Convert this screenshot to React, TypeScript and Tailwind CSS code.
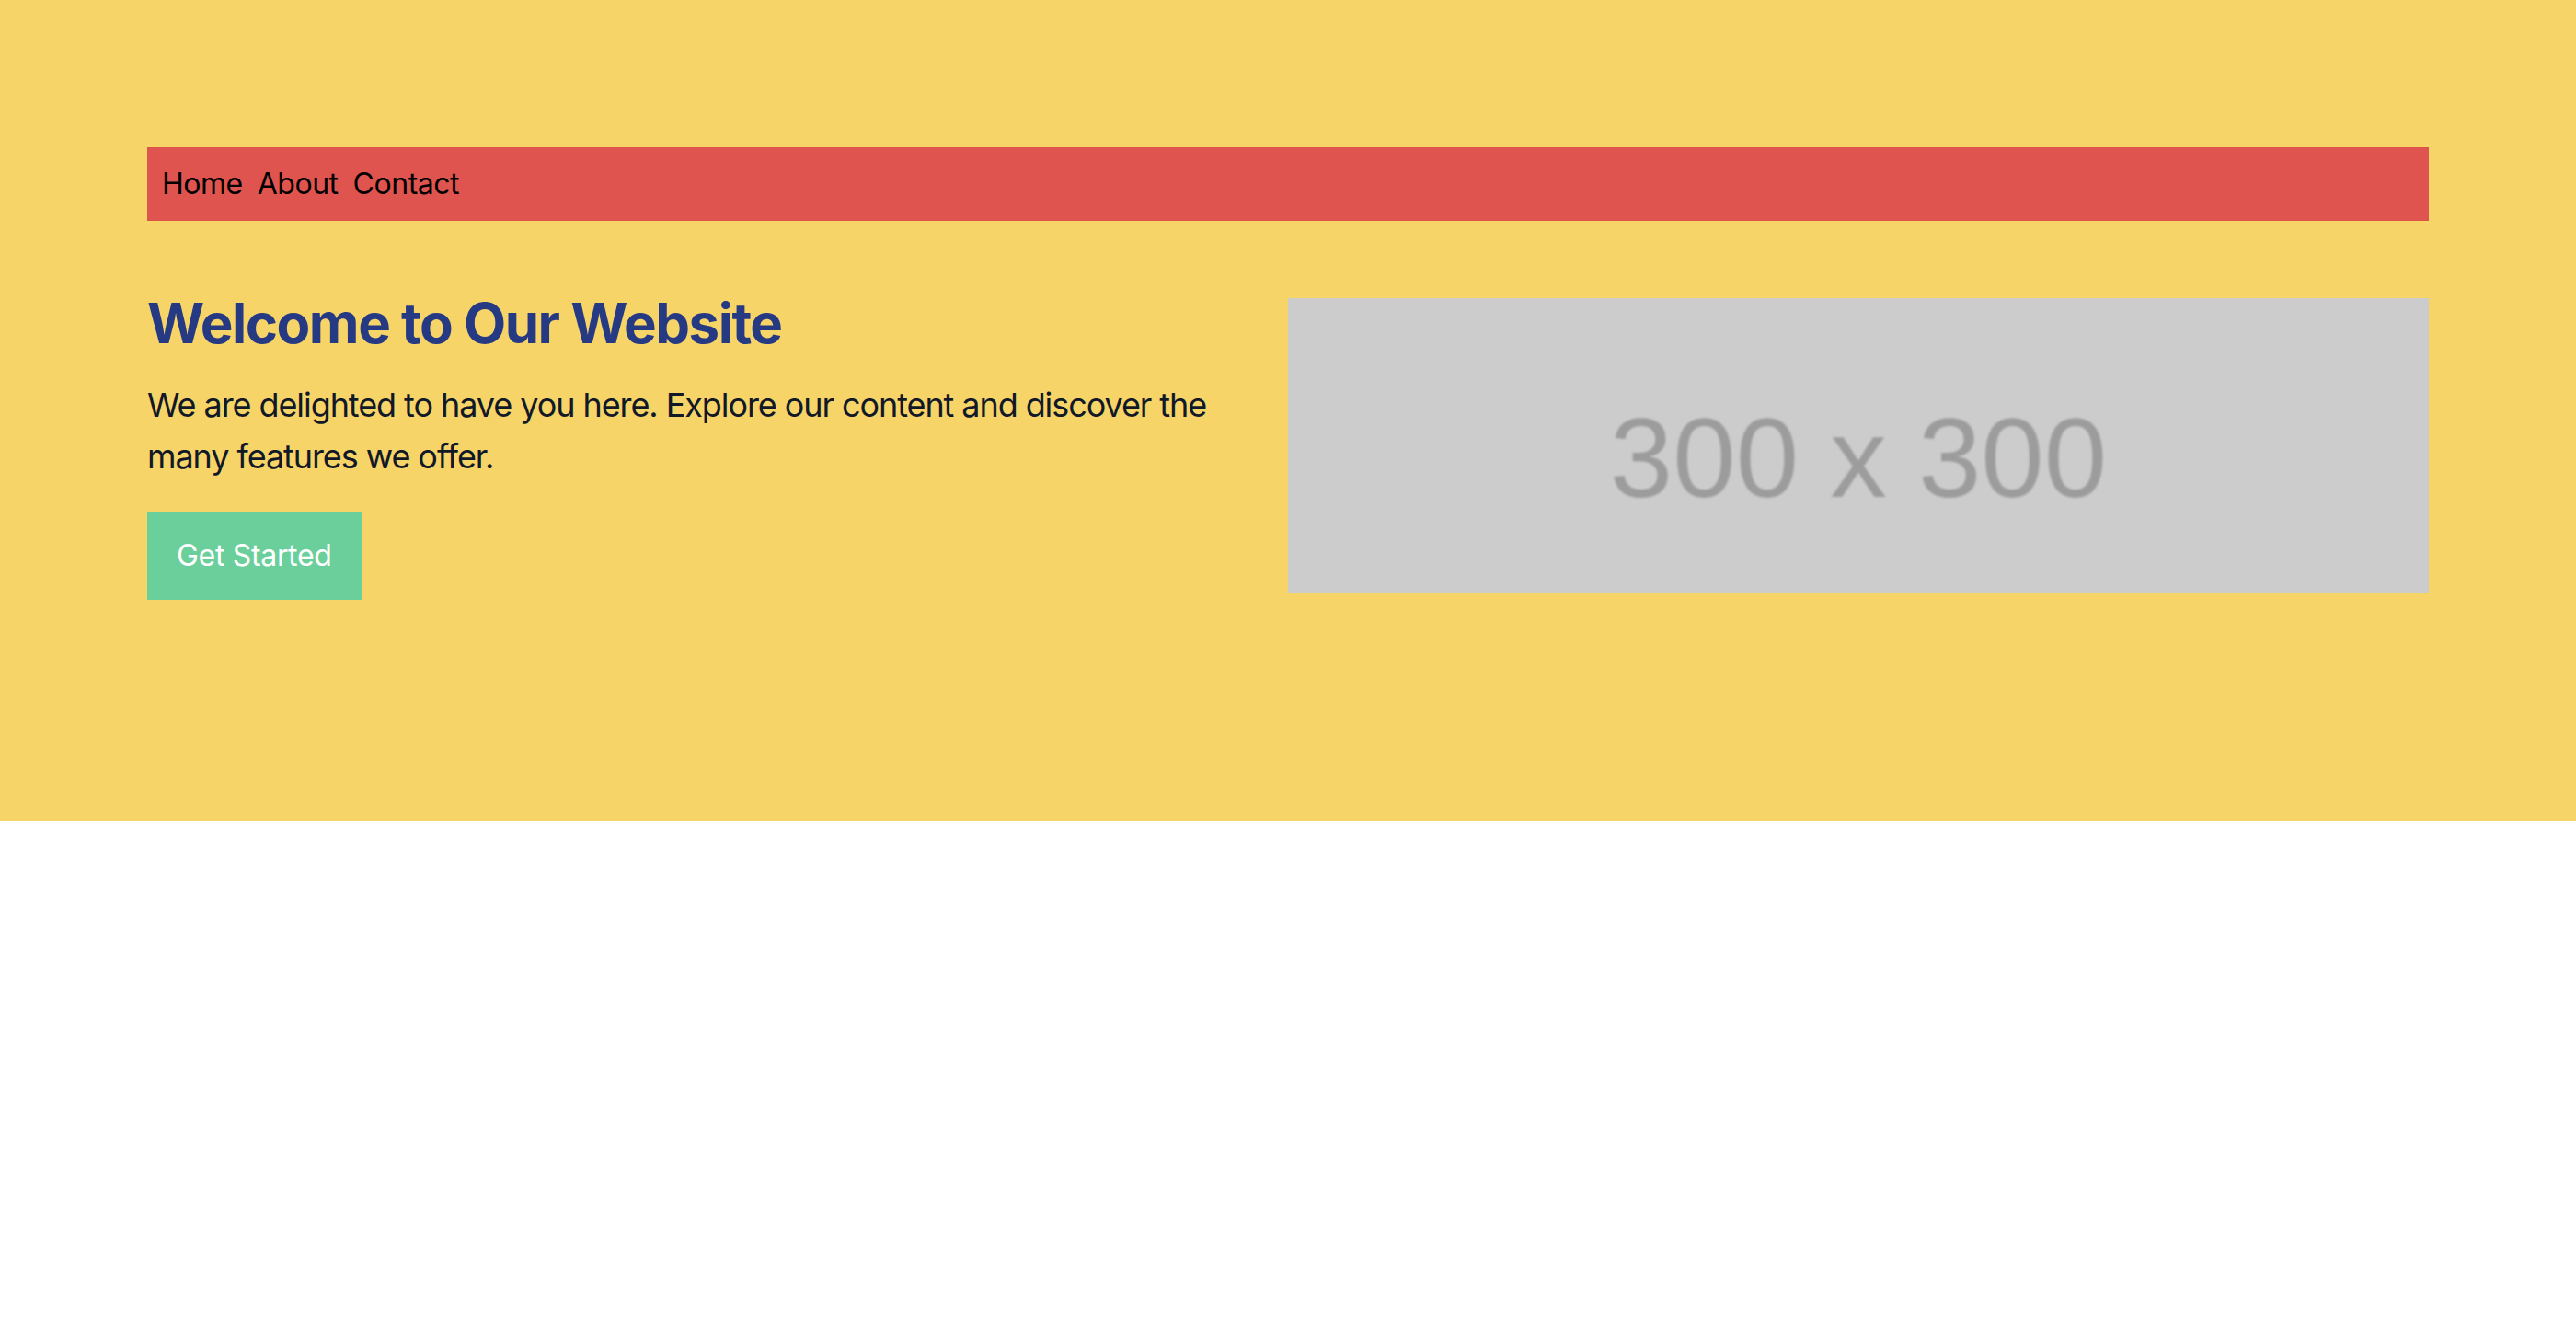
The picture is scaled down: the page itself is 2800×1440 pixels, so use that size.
import React from "react";

export default function App() {
  return (
    <div className="min-h-[1440px] bg-white" style={{ fontFamily: "Inter, 'Noto Sans', sans-serif" }}>
      <section className="bg-[#f6d468] px-40 pt-40 pb-60">
        <nav className="bg-[#df544f] p-4">
          <ul className="flex gap-4 text-[32px] leading-[48px] tracking-[-0.015em] text-black">
            <li>Home</li>
            <li>About</li>
            <li>Contact</li>
          </ul>
        </nav>
        <div className="mt-[75px] grid grid-cols-2 items-center">
          <div className="pr-12">
            <h1 className="mb-[25px] text-[60px] font-bold leading-[72px] tracking-[-0.025em] text-[#263a84]">
              Welcome to Our Website
            </h1>
            <p className="mb-8 text-[36px] leading-[56px] tracking-[-0.03em] text-[#111827]">
              We are delighted to have you here. Explore our content and discover the many features we offer.
            </p>
            <button className="bg-[#6bcf9b] px-8 py-6 text-[32px] leading-[48px] tracking-[-0.01em] text-white">
              Get Started
            </button>
          </div>
          <div className="flex h-[320px] items-center justify-center overflow-hidden bg-[#cccccc]">
            <span
              className="pt-7 text-[123px] leading-none text-[#9c9c9c] blur-[1px]"
              style={{ fontFamily: "'Liberation Sans', Arial, sans-serif" }}
            >
              300 x 300
            </span>
          </div>
        </div>
      </section>
    </div>
  );
}
